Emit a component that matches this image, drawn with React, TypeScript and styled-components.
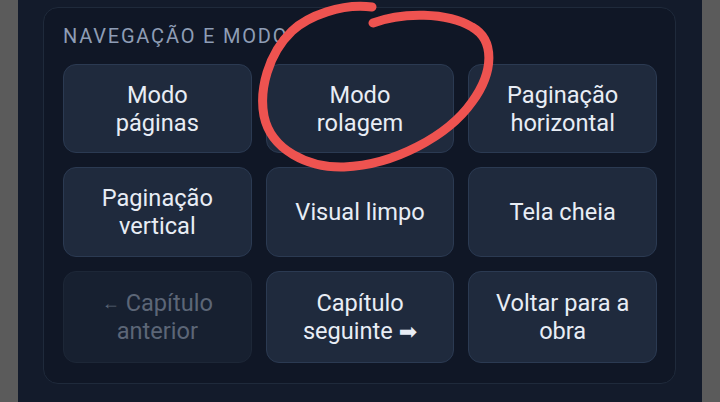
import React from 'react';
import styled, { createGlobalStyle } from 'styled-components';

const GlobalStyle = createGlobalStyle`
  html, body {
    margin: 0;
    padding: 0;
    background: #5b5b5b;
  }
  body {
    font-family: Roboto, "Liberation Sans", sans-serif;
  }
`;

const Page = styled.div`
  height: 402px;
  padding: 0 18px;
  overflow: hidden;
`;

const Panel = styled.div`
  position: relative;
  height: 100%;
  box-sizing: border-box;
  background: #131b2b;
  padding: 7px 26px 0 25px;
`;

const Section = styled.section`
  border: 1px solid #1f2a3b;
  border-radius: 15px;
  background: #101726;
  padding: 16px 18px 20px 19px;
`;

const SectionTitle = styled.h3`
  margin: 0 0 16px;
  font-size: 20px;
  line-height: 24px;
  font-weight: 400;
  letter-spacing: 1.8px;
  color: #8e9db5;
  text-transform: uppercase;
`;

const Grid = styled.div`
  display: grid;
  grid-template-columns: repeat(3, 1fr);
  grid-template-rows: 89px 90px 92px;
  gap: 14px;
`;

const ActionButton = styled.button<{ $disabled?: boolean }>`
  display: flex;
  align-items: center;
  justify-content: center;
  padding: 0 12px;
  border-radius: 13px;
  border: 1px solid ${(p) => (p.$disabled ? '#1d2737' : '#2b3a52')};
  background: ${(p) => (p.$disabled ? '#172030' : '#1f2a3d')};
  color: ${(p) => (p.$disabled ? '#5c6677' : '#e8edf5')};
  font-family: Roboto, "Liberation Sans", sans-serif;
  font-size: 23.6px;
  line-height: 28px;
  text-align: center;
  cursor: ${(p) => (p.$disabled ? 'default' : 'pointer')};
`;

const SmallArrow = styled.span`
  font-size: 18px;
  vertical-align: 2px;
`;

const HeavyArrow = styled.span`
  font-family: "DejaVu Sans", sans-serif;
  font-size: 22px;
`;

const Scribble = styled.svg`
  position: absolute;
  left: 0;
  top: 0;
  pointer-events: none;
`;

type Item = { label: React.ReactNode; disabled?: boolean };

const items: Item[] = [
  { label: <>Modo<br />páginas</> },
  { label: <>Modo<br />rolagem</> },
  { label: <>Paginação<br />horizontal</> },
  { label: <>Paginação<br />vertical</> },
  { label: 'Visual limpo' },
  { label: 'Tela cheia' },
  { label: <><SmallArrow>←</SmallArrow> Capítulo<br />anterior</>, disabled: true },
  { label: <>Capítulo<br />seguinte <HeavyArrow>➡</HeavyArrow></> },
  { label: <>Voltar para a<br />obra</> },
];

const App: React.FC = () => {
  return (
    <Page>
      <GlobalStyle />
      <Panel>
        <Section>
          <SectionTitle>Navegação e modo</SectionTitle>
          <Grid>
            {items.map((item, i) => (
              <ActionButton key={i} $disabled={item.disabled} disabled={item.disabled}>
                <span>{item.label}</span>
              </ActionButton>
            ))}
          </Grid>
        </Section>
        {/* hand-drawn red circle around "Modo rolagem" */}
        <Scribble width="684" height="402" viewBox="18 0 684 402">
          <path
            d="M372 7 C342 3 308 16 292 31 C268 54 259 90 264 116 C271 150 308 168 344 167 C394 165 448 136 472 102 C494 72 495 40 472 27 C447 12 402 12 373 23"
            fill="none"
            stroke="#ee5350"
            strokeWidth="9"
            strokeLinecap="round"
            strokeLinejoin="round"
          />
        </Scribble>
      </Panel>
    </Page>
  );
};

export default App;
